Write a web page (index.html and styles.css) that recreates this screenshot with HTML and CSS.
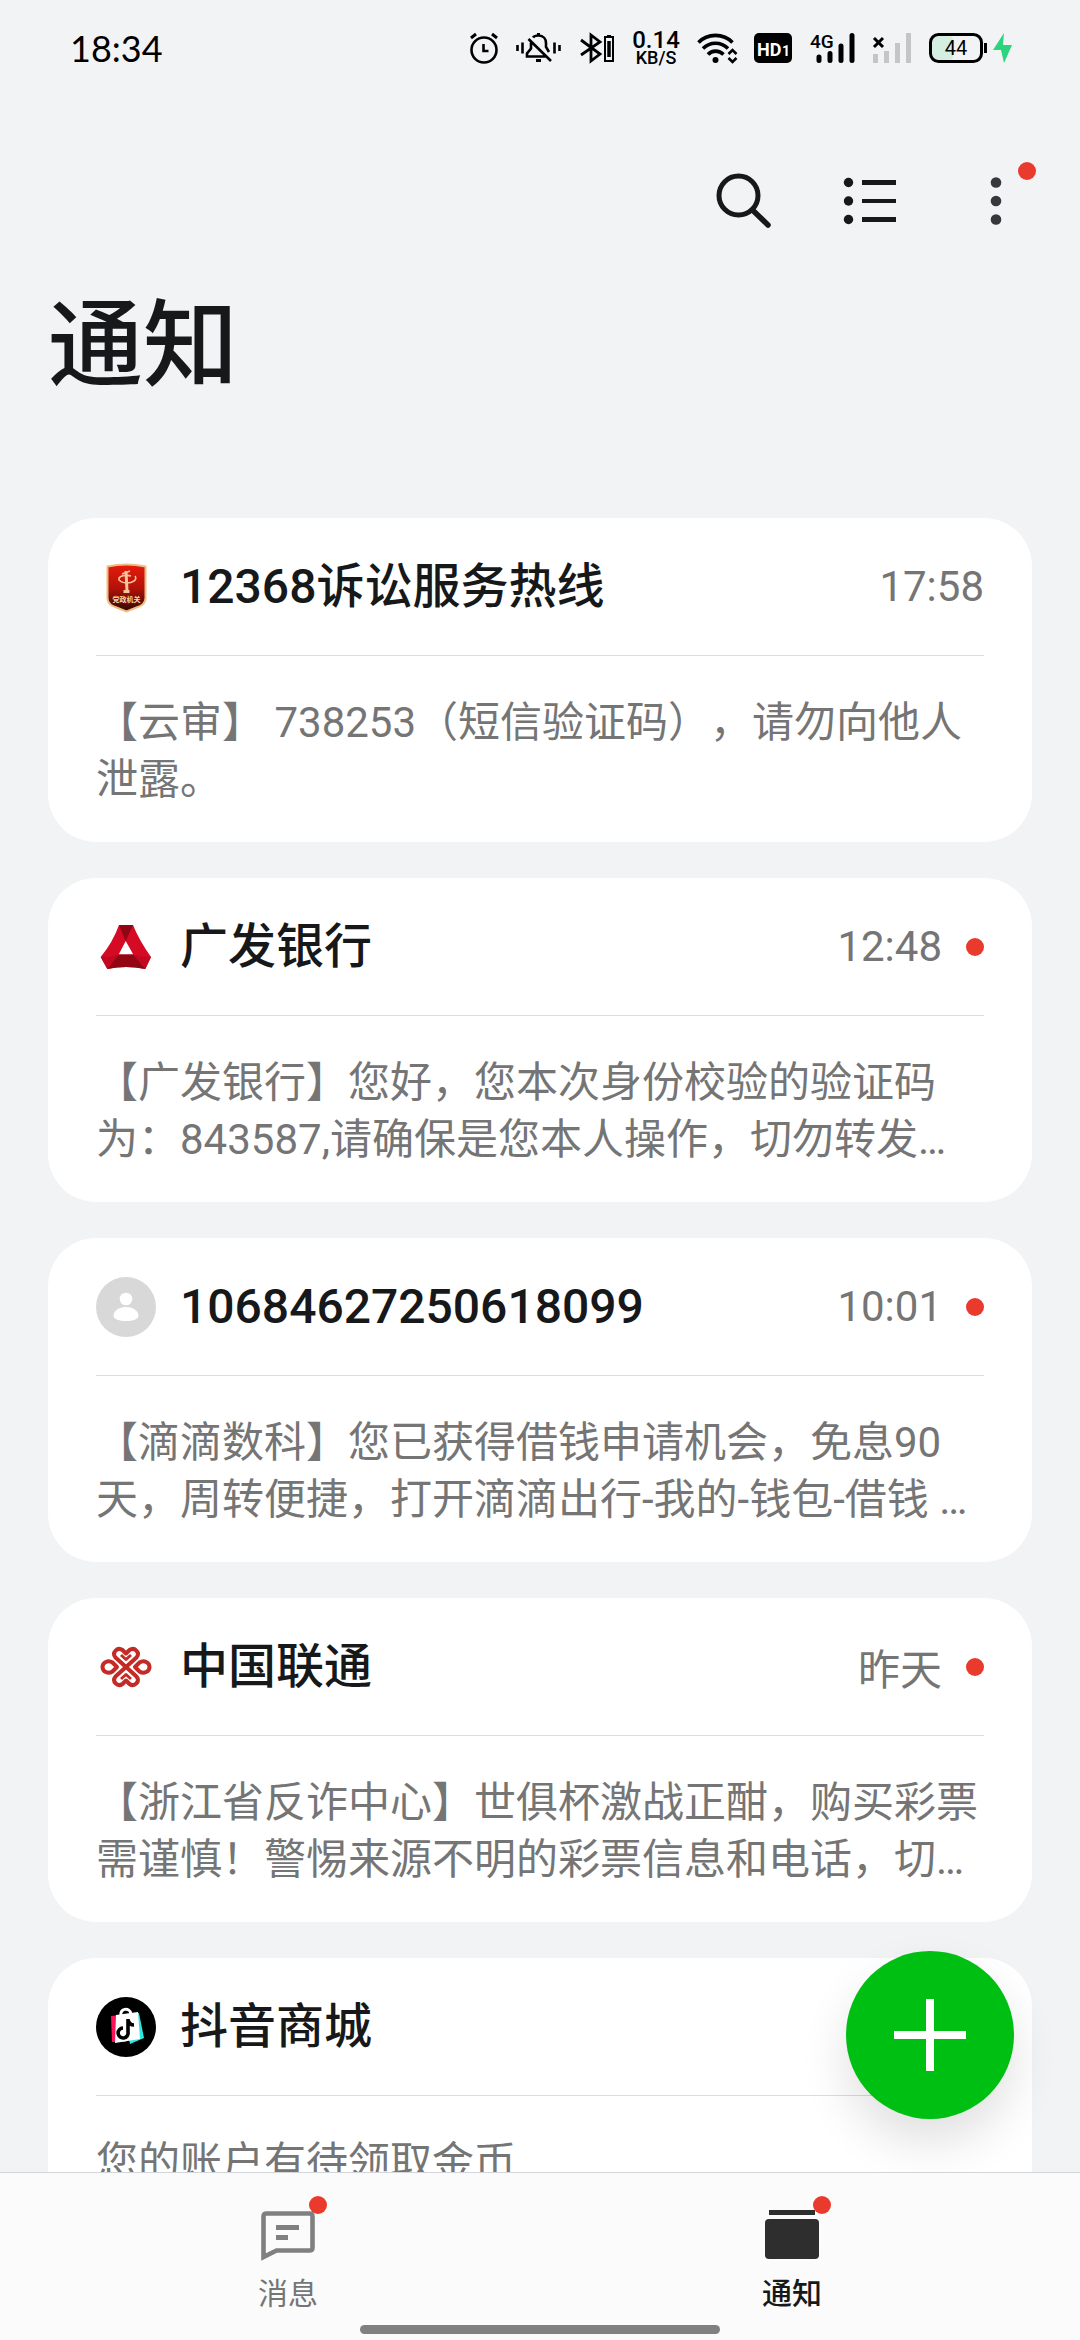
FILE: index.html
```html
<!DOCTYPE html>
<html lang="zh-CN">
<head>
<meta charset="utf-8">
<meta name="viewport" content="width=device-width, initial-scale=1">
<title>通知</title>
<link rel="stylesheet" href="styles.css">
</head>
<body>
<div class="status">
  <time class="clock">18:34</time>
  <div class="status-icons">
    <svg width="28" height="30" viewBox="0 0 28 30" fill="none" stroke="#000"><circle cx="14" cy="17" r="12.5" stroke-width="2.6"/><path d="M1 5l5-4M27 5l-5-4" stroke-width="3"/><path d="M13.5 11v7h5" stroke-width="2.6"/></svg>
    <svg width="45" height="30" viewBox="0 0 45 30" fill="none" stroke="#000"><path d="M1.5 12v6M6.500 9.500v11M38.500 9.500v11M43.500 12v6" stroke-width="2.6"/><path d="M17 4.500C18 3 20 2.500 22.500 2.500c5 0 7.500 3.500 7.500 7.500v4l3 5M15 9.500v6l-4 5v3h20M12.500 6L35 28" stroke-width="2.6"/><path d="M22.500 0v3M20 27.500h5" stroke-width="3"/></svg>
    <svg width="36" height="30" viewBox="-1 0 36 30" fill="none" stroke="#000"><path d="M1 7l19 14-9 7V2l9 7L1 22" stroke-width="2.8"/><rect x="25" y="4" width="8" height="24" stroke-width="2"/><path d="M27 3h4" stroke-width="2"/><path d="M29 8v16" stroke-width="3.500"/></svg>
    <div class="speed"><b>0.14</b><span>KB/S</span></div>
    <svg width="39" height="30" viewBox="0 0 39 30" fill="none" stroke="#000"><path d="M1.500 9.500c9-9.500 25-9.500 34 0M6 15.500c7-7 18-7 25 0M11 21.500c4-4.500 11-4.500 15.500 0" stroke-width="3.600"/><circle cx="18.500" cy="27" r="3" fill="#000" stroke="none"/><path d="M31.500 21l4-4 4 4M31.500 25l4 4 4-4" stroke-width="2.600"/></svg>
    <svg width="38" height="30" viewBox="0 0 38 30"><rect width="38" height="30" rx="5"/><text x="3" y="23" class="hd">HD</text><text x="28" y="23" class="hd hd-small">1</text></svg>
    <svg width="45" height="30" viewBox="0 0 45 30"><text x="0" y="15" class="net">4G</text><g stroke="#000" stroke-width="5" stroke-linecap="round"><path d="M9 24v3.500M20 20.500v7M31 13v14.500M42 2.500v25"/></g></svg>
    <svg width="38" height="30" viewBox="2 0 38 30"><g stroke="#c4c5c7" stroke-width="5"><path d="M4.500 21v9M15.500 18v12M26.500 10v20M37.500 0v30"/></g><path d="M3 5l9 9M12 5l-9 9" stroke="#000" stroke-width="3"/></svg>
    <svg width="83" height="30" viewBox="0 0 83 30"><rect x="3" y="3" width="21" height="24" rx="4" fill="#d4efe2"/><rect x="1.500" y="1.500" width="51" height="27" rx="8" fill="none" stroke="#000" stroke-width="3"/><path d="M56.500 10v10" stroke="#000" stroke-width="3"/><text x="27" y="22" class="level">44</text><path d="M75 0l-11 17h8l3 13 8-18h-9z" fill="#2bd47d"/></svg>
  </div>
</div>

<main class="screen">
  <header class="top">
    <div class="actions">
      <button class="icon-button" aria-label="搜索"><svg width="56" height="56" viewBox="0 0 56 56" fill="none" stroke="#16181a"><circle cx="22.500" cy="22.500" r="19.500" stroke-width="5"/><path d="M36.500 37L52 52" stroke-width="5.500" stroke-linecap="round"/></svg></button>
      <button class="icon-button" aria-label="列表"><svg width="56" height="56" viewBox="0 0 56 56"><g fill="#16181a"><circle cx="6.500" cy="9.500" r="4.700"/><circle cx="6.500" cy="28" r="4.700"/><circle cx="6.500" cy="46.500" r="4.700"/><path d="M20 7h34v5H20zM20 26h34v4H20zM20 44h34v5H20z"/></g></svg></button>
      <button class="icon-button" aria-label="更多"><svg width="56" height="56" viewBox="0 0 56 56" fill="#36383b"><circle cx="28" cy="9.500" r="5.300"/><circle cx="28" cy="28" r="5.300"/><circle cx="28" cy="46.500" r="5.300"/></svg><i class="dot badge"></i></button>
    </div>
    <h1 class="title">通知</h1>
  </header>

  <section class="list">
    <article class="card">
      <div class="card-head">
        <svg class="avatar" viewBox="0 0 60 60"><defs><linearGradient id="shield" x1="0" y1="0" x2="0" y2="1"><stop offset="0" stop-color="#e61b0c"/><stop offset=".5" stop-color="#b3120a"/><stop offset="1" stop-color="#2e0805"/></linearGradient></defs><path d="M11.500 9.500Q30 5.500 49.500 9.500V41c0 6-5 8-9 9.500l-10 4-10-4c-4-1.500-9-3.500-9-9.500z" fill="url(#shield)" stroke="#eebd80" stroke-width="2"/><g fill="none" stroke="#f6c49a"><path d="M30 14l1 20M27.500 34.500h6" stroke-width="3"/><path d="M26 17l8-3M39 19c3 4-3 7-8 7-4 0-9-2-8-5 2-3 9-3 12-2" stroke-width="1.600"/></g><text x="30.500" y="45" class="shield-text">党政机关</text></svg>
        <h2 class="name">12368诉讼服务热线</h2>
        <time class="when">17:58</time>
      </div>
      <p class="body">【云审】 738253（短信验证码），请勿向他人泄露。</p>
    </article>

    <article class="card">
      <div class="card-head">
        <svg class="avatar" viewBox="0 0 60 60"><path d="M23 8h14q6 15 18 32l-5.700 12Q30 48 11.300 52L4.700 40Q17 25 23 8zM29.700 24l-7 13.500h14.600z" fill="#d50a24" fill-rule="evenodd"/><path d="M23 8h14l-7.300 16z" fill="#8d0714"/><path d="M22.700 37.500h14.600L49.300 52Q30 48 11.300 52z" fill="#920512"/><path d="M4.700 40l11-.5 7-2L11.300 52zM55 40l-11-.5-6.700-2L49.300 52z" fill="#c10820"/></svg>
        <h2 class="name">广发银行</h2>
        <time class="when">12:48</time><i class="dot"></i>
      </div>
      <p class="body">【广发银行】您好，您本次身份校验的验证码为：843587,请确保是您本人操作，切勿转发…</p>
    </article>

    <article class="card">
      <div class="card-head">
        <svg class="avatar" viewBox="0 0 60 60"><circle cx="30" cy="30" r="30" fill="#d8d8d8"/><g fill="#fff"><circle cx="30" cy="22" r="6.300"/><path d="M17.500 39c0-5 5-9 12.500-9s12.500 4 12.500 9c0 3-6 5-12.500 5s-12.500-2-12.500-5z"/></g></svg>
        <h2 class="name">10684627250618099</h2>
        <time class="when">10:01</time><i class="dot"></i>
      </div>
      <p class="body">【滴滴数科】您已获得借钱申请机会，免息90天，周转便捷，打开滴滴出行-我的-钱包-借钱 …</p>
    </article>

    <article class="card">
      <div class="card-head">
        <svg class="avatar" viewBox="0 0 60 60" fill="none" stroke="#c42a26" stroke-width="4" stroke-linejoin="round"><path d="M30 30L19.500 20.500c-4-5 2-11 7-7.500l3.500 3.500 3.500-3.500c5-3.500 11 2.500 7 7.500L30 30 19.500 39.500c-4 5 2 11 7 7.500l3.500-3.500 3.500 3.500c5 3.500 11-2.500 7-7.500z"/><path d="M25 18l5 4.500 5-4.500M25 42l5-4.500 5 4.500" stroke-width="3"/><path d="M21 30l-4.500-4.500c-4.500-3-10 0-10 4.500s5.500 7.500 10 4.500zM39 30l4.500-4.500c4.500-3 10 0 10 4.500s-5.500 7.500-10 4.500z"/></svg>
        <h2 class="name">中国联通</h2>
        <time class="when">昨天</time><i class="dot"></i>
      </div>
      <p class="body">【浙江省反诈中心】世俱杯激战正酣，购买彩票需谨慎！警惕来源不明的彩票信息和电话，切…</p>
    </article>

    <article class="card">
      <div class="card-head">
        <svg class="avatar" viewBox="0 0 60 60"><circle cx="30" cy="30" r="30"/><path d="M15 19l18-2-3 28-14 0z" fill="#fa1456"/><path d="M28 18l15-2 5 25-14 6z" fill="#29e8e0"/><path d="M20 18l22-3 2 27-25 4z" fill="#fff"/><path d="M25 19c-2-8 9-9 10-2" fill="none" stroke="#fff" stroke-width="3"/><path d="M32 22v13a5 5 0 1 1-5-4M32 23c1 4 3 5 6 5" fill="none" stroke="#000" stroke-width="3.600"/></svg>
        <h2 class="name">抖音商城</h2>
      </div>
      <p class="body">您的账户有待领取金币</p>
    </article>
  </section>
</main>

<footer class="bottom">
  <button class="fab" aria-label="新建"><svg width="72" height="72" viewBox="0 0 72 72"><path d="M32 0h8v32h32v8H40v32h-8V40H0v-8h32z" fill="#fff"/></svg></button>
  <nav class="tabs">
    <a class="tab" href="#messages"><span class="tab-icon"><svg width="54" height="54" viewBox="0 0 54 54"><path d="M2.500 47V6.500q0-3 3-3h43q3 0 3 3v31q0 3-3 3h-33z" fill="none" stroke="#808080" stroke-width="4.600"/><path d="M15 15h23v5H15zM15 25h12v5H15z" fill="#808080"/></svg><i class="dot badge"></i></span>消息</a>
    <a class="tab active" href="#notices" aria-current="page"><span class="tab-icon"><svg width="54" height="54" viewBox="0 0 54 54" fill="#2e2e2e"><path d="M4 0h46v5H4z"/><rect y="9" width="54" height="40" rx="4"/></svg><i class="dot badge"></i></span>通知</a>
  </nav>
  <div class="home-bar"></div>
</footer>
</body>
</html>
```
FILE: styles.css
```css
* {
  box-sizing: border-box;
}

body {
  display: flex;
  flex-direction: column;
  height: 100vh;
  margin: 0;
  overflow: hidden;
  background: #f2f3f5;
  color: #16181a;
  font-family: Roboto, "Noto Sans CJK SC", sans-serif;
  text-spacing-trim: space-all;
}

h1, h2, p {
  margin: 0;
}

button {
  border: 0;
  padding: 0;
  background: none;
  color: inherit;
  font: inherit;
}

svg {
  display: block;
  flex: none;
  overflow: visible;
}

/* Status bar */
.status {
  display: flex;
  flex: none;
  align-items: center;
  justify-content: space-between;
  height: 96px;
  padding: 0 68px 0 70px;
  color: #000;
}

.clock {
  font-family: Lato, sans-serif;
  font-size: 36px;
}

.status-icons {
  display: flex;
  align-items: center;
  gap: 18px;
}

.speed {
  display: flex;
  flex-direction: column;
  align-items: center;
  width: 46px;
  font-size: 18px;
  font-weight: 500;
  line-height: 16px;
}

.speed b {
  font-size: 24px;
  font-weight: 500;
  line-height: 20px;
}

.hd {
  fill: #fff;
  font-size: 18px;
  font-weight: 700;
}

.hd-small {
  font-size: 14px;
}

.net {
  font-size: 19px;
  font-weight: 500;
}

.level {
  text-anchor: middle;
  font-size: 20px;
}

/* Scrolling content */
.screen {
  flex: 1;
  min-height: 0;
  overflow-y: auto;
  scrollbar-width: none;
}

.top {
  padding: 77px 56px 99px 48px;
}

.actions {
  display: flex;
  justify-content: flex-end;
  gap: 70px;
}

.icon-button {
  position: relative;
}

.title {
  padding-top: 46px;
  font-size: 95px;
  font-weight: 500;
  line-height: 144px;
}

.dot {
  flex: none;
  width: 18px;
  height: 18px;
  border-radius: 50%;
  background: #ea3a2d;
}

.badge {
  position: absolute;
  top: -11px;
  right: -12px;
}

.list {
  display: flex;
  flex-direction: column;
  gap: 36px;
  padding: 0 48px 36px;
}

.card {
  padding: 0 48px 34px;
  border-radius: 48px;
  background: #fff;
}

.card-head {
  display: flex;
  align-items: center;
  gap: 24px;
  height: 138px;
  border-bottom: 1px solid #dcdcdc;
}

.avatar {
  width: 60px;
  height: 60px;
}

.shield-text {
  fill: #f8d9a8;
  font-size: 7px;
  font-weight: 700;
  text-anchor: middle;
}

.name {
  flex: 1;
  font-size: 48px;
  font-weight: 500;
  line-height: 60px;
}

.when {
  color: #757575;
  font-size: 42px;
}

.body {
  padding-top: 38px;
  color: #757575;
  font-size: 42px;
  line-height: 57px;
}

/* Bottom bar */
.bottom {
  position: relative;
  flex: none;
  padding-bottom: 6px;
  border-top: 1px solid #d4d5d8;
  background: #fbfbfb;
}

.fab {
  position: absolute;
  right: 66px;
  bottom: calc(100% + 54px);
  display: grid;
  place-items: center;
  width: 168px;
  height: 168px;
  border-radius: 50%;
  background: #00bf13;
  box-shadow: 0 24px 48px rgba(0, 0, 0, .12);
  clip-path: inset(-80px -80px -54px -80px);
}

.tabs {
  display: flex;
  padding: 0 36px;
}

.tab {
  display: flex;
  flex: 1;
  flex-direction: column;
  align-items: center;
  gap: 10px;
  padding: 37px 0 11px;
  color: #757575;
  font-size: 30px;
  line-height: 40px;
  text-decoration: none;
}

.active {
  color: #16181a;
  font-weight: 500;
}

.tab-icon {
  position: relative;
}

.tab-icon .badge {
  top: -14px;
}

.home-bar {
  width: 360px;
  height: 9px;
  margin: 0 auto;
  border-radius: 5px;
  background: #808080;
}
```
